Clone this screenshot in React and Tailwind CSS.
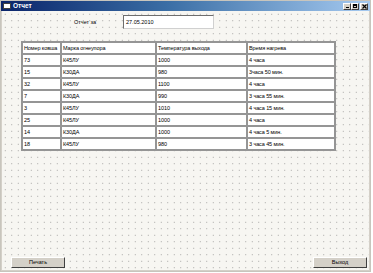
const rows = [
  ["73", "К45ЛУ", "1000", "4 часа"],
  ["15", "К30ДА", "980", "3часа 50 мин."],
  ["32", "К45ЛУ", "1100", "4 часа"],
  ["7", "К30ДА", "990", "3 часа 55 мин."],
  ["3", "К45ЛУ", "1010", "4 часа 15 мин."],
  ["25", "К45ЛУ", "1000", "4 часа"],
  ["14", "К30ДА", "1000", "4 часа 5 мин."],
  ["18", "К45ЛУ", "980", "3 часа 45 мин."],
];

const widths = ["w-[39px]", "w-[95px]", "w-[91px]", "w-[88px]"];

function Cell({ children, i }) {
  return (
    <td
      className={`${widths[i]} h-[12px] border-2 border-[#959595] bg-white px-[1px] py-0 align-middle text-[5.5px] leading-[7px] tracking-[-0.1px] whitespace-nowrap`}
    >
      {children}
    </td>
  );
}

function WinBtn({ children, className = "" }) {
  return (
    <div
      className={`flex h-[7px] w-[8px] items-center justify-center border border-t-white border-l-white border-r-[#404040] border-b-[#404040] bg-[#d4d0c8] ${className}`}
    >
      {children}
    </div>
  );
}

export default function App() {
  return (
    <div className="h-[273px] w-[373px] bg-white font-['Liberation_Sans',Arial,sans-serif] text-[6px] text-black">
      <div className="flex h-[272px] w-[371px] flex-col border border-[#c8c5bd] bg-[#d4d0c8]">
        {/* title bar */}
        <div className="flex h-[10px] items-center bg-[linear-gradient(to_right,#0a246a,#3a6ea5_45%,#a6caf0)] pl-[2px] pr-[2px]">
          <div className="h-[6px] w-[8px] border border-[#404040] bg-white" />
          <span className="ml-[2px] text-[6.5px] font-bold leading-none text-white">Отчет</span>
          <div className="ml-auto flex items-center">
            <WinBtn>
              <div className="mt-[3px] h-[1px] w-[3px] bg-black" />
            </WinBtn>
            <WinBtn>
              <div className="h-[4px] w-[4px] border border-t-2 border-black" />
            </WinBtn>
            <WinBtn className="ml-[1px]">
              <svg width="5" height="5" viewBox="0 0 5 5">
                <path d="M0.5 0.5 L4.5 4.5 M4.5 0.5 L0.5 4.5" stroke="black" strokeWidth="1.2" />
              </svg>
            </WinBtn>
          </div>
        </div>

        {/* client area */}
        <div className="mx-[1px] mb-[1px] flex flex-1 flex-col bg-[#f7f6f2] bg-[radial-gradient(circle,#999999_0.55px,transparent_0.85px)] bg-[length:6.5px_6.5px]">
          <div className="mt-[4px] ml-[72px] flex items-center">
            <span className="w-[49px] text-[5.5px]">Отчет за</span>
            <div className="flex h-[14px] w-[91px] items-center border border-t-[#6e6e6e] border-l-[#6e6e6e] border-r-[#d0d0d0] border-b-[#d0d0d0] bg-white pl-[2px] text-[5.5px]">
              27.05.2010
            </div>
          </div>

          <table className="mt-[12px] ml-[19px] w-[313px] table-fixed border-collapse">
            <tbody>
              <tr>
                <Cell i={0}>Номер ковша</Cell>
                <Cell i={1}>Марка огнеупора</Cell>
                <Cell i={2}>Температура выхода</Cell>
                <Cell i={3}>Время нагрева</Cell>
              </tr>
              {rows.map((r) => (
                <tr key={r[0]}>
                  {r.map((v, i) => (
                    <Cell key={i} i={i}>
                      {v}
                    </Cell>
                  ))}
                </tr>
              ))}
            </tbody>
          </table>

          <div className="mt-auto mb-[2px] flex items-center justify-between pl-[9px] pr-[2px]">
            <button className="flex h-[11px] w-[54px] items-center justify-center border border-t-white border-l-white border-r-[#404040] border-b-[#404040] bg-[#d4d0c8] text-[5.5px] leading-none">
              Печать
            </button>
            <button className="flex h-[11px] w-[54px] items-center justify-center border border-t-white border-l-white border-r-[#404040] border-b-[#404040] bg-[#d4d0c8] text-[5.5px] leading-none">
              Выход
            </button>
          </div>
        </div>
      </div>
    </div>
  );
}
